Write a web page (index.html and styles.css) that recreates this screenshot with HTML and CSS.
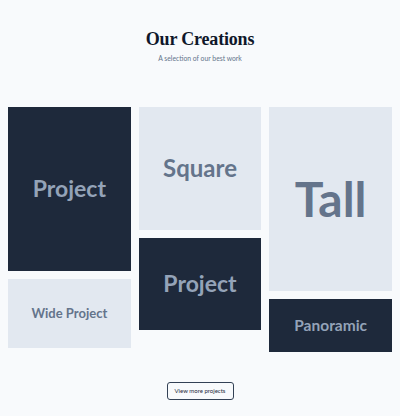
FILE: index.html
```html
<!DOCTYPE html>
<html lang="en">
<head>
<meta charset="utf-8">
<title>Our Creations</title>
<link rel="stylesheet" href="styles.css">
</head>
<body>
  <header class="intro">
    <h1 class="intro-title">Our Creations</h1>
    <p class="intro-sub">A selection of our best work</p>
  </header>

  <main class="gallery">
    <div class="gallery-col">
      <div class="tile tile-dark ratio-3x4"><span class="label label-project">Project</span></div>
      <div class="tile tile-light ratio-16x9"><span class="label label-wide">Wide Project</span></div>
    </div>
    <div class="gallery-col">
      <div class="tile tile-light ratio-1x1"><span class="label label-square">Square</span></div>
      <div class="tile tile-dark ratio-4x3"><span class="label label-project">Project</span></div>
    </div>
    <div class="gallery-col">
      <div class="tile tile-light ratio-2x3"><span class="label label-tall">Tall</span></div>
      <div class="tile tile-dark ratio-21x9"><span class="label label-pano">Panoramic</span></div>
    </div>
  </main>

  <footer class="more">
    <a class="more-btn" href="#">View more projects</a>
  </footer>
</body>
</html>
```

FILE: styles.css
```css
* {
  box-sizing: border-box;
}

html, body {
  margin: 0;
  padding: 0;
}

body {
  background: #f8fafc;
  font-family: Lato, "Noto Sans", sans-serif;
  color: #0f172a;
  width: 400px;
  height: 416px;
  overflow: hidden;
}

/* heading block */
.intro {
  text-align: center;
  padding-top: 28px;
}

.intro-title {
  margin: 0;
  font-family: "Liberation Serif", "DejaVu Serif", serif;
  font-weight: 700;
  font-size: 18px;
  line-height: 22px;
  letter-spacing: -0.01em;
  color: #0f172a;
}

.intro-sub {
  margin: 3px 0 0;
  font-size: 6.8px;
  line-height: 10px;
  color: #64748b;
}

/* three-column masonry */
.gallery {
  display: flex;
  gap: 8px;
  padding: 0 8px;
  margin-top: 44px;
  align-items: flex-start;
}

.gallery-col {
  flex: 1 1 0;
  min-width: 0;
  display: flex;
  flex-direction: column;
  gap: 8px;
}

.tile {
  width: 100%;
  display: flex;
  align-items: center;
  justify-content: center;
  font-weight: 700;
}

.tile-dark {
  background: #1e293b;
  color: #94a3b8;
}

.tile-light {
  background: #e2e8f0;
  color: #64748b;
}

.ratio-3x4  { aspect-ratio: 3 / 4; }
.ratio-16x9 { aspect-ratio: 16 / 9; }
.ratio-1x1  { aspect-ratio: 1 / 1; }
.ratio-4x3  { aspect-ratio: 4 / 3; }
.ratio-2x3  { aspect-ratio: 2 / 3; }
.ratio-21x9 { aspect-ratio: 21 / 9; }

.label {
  line-height: 1;
  white-space: nowrap;
}

.label-project { font-size: 23px; }
.label-wide    { font-size: 13px; }
.label-square  { font-size: 24px; }
.label-tall    { font-size: 48px; }
.label-pano    { font-size: 15.5px; }

/* call to action */
.more {
  display: flex;
  justify-content: center;
  margin-top: 30px;
}

.more-btn {
  display: inline-flex;
  align-items: center;
  justify-content: center;
  width: 67px;
  height: 18px;
  border: 1px solid #334155;
  border-radius: 3px;
  font-size: 6px;
  color: #1e293b;
  text-decoration: none;
}
```
